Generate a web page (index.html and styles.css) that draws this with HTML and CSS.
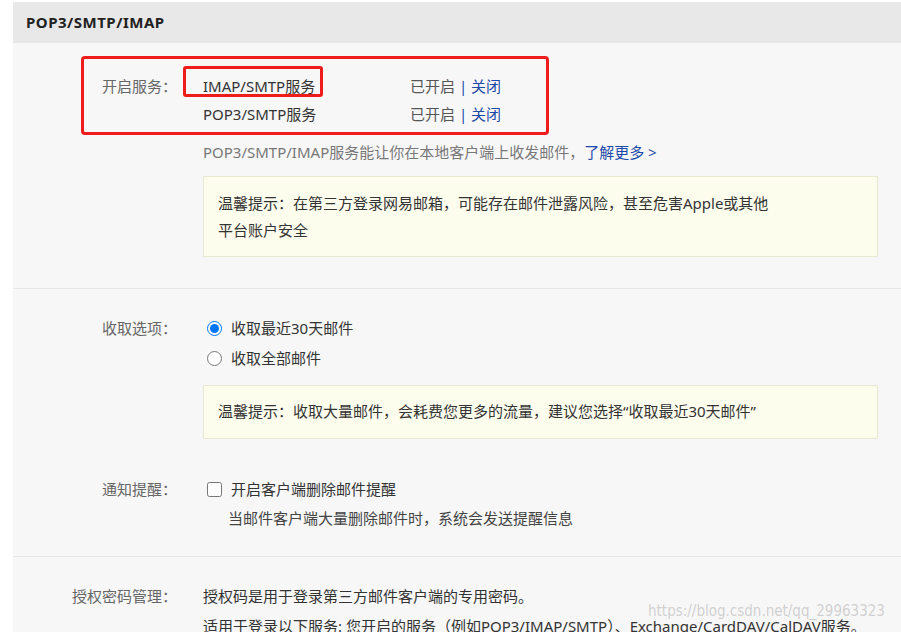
FILE: index.html
```html
<!DOCTYPE html>
<html>
<head>
  <meta charset="utf-8">
  <link rel="stylesheet" href="styles.css">
</head>
<body>
  <div class="panel">
    <header class="panel-head">POP3/SMTP/IMAP</header>

    <section class="block block-service">
      <div class="row">
        <div class="label">开启服务：</div>
        <div class="value">
          <div class="service">
            <span class="service-name">IMAP/SMTP服务</span>
            <span class="service-state">已开启 <a href="#" class="link">| 关闭</a></span>
          </div>
          <div class="service">
            <span class="service-name">POP3/SMTP服务</span>
            <span class="service-state">已开启 <a href="#" class="link">| 关闭</a></span>
          </div>
          <p class="desc">POP3/SMTP/IMAP服务能让你在本地客户端上收发邮件，<a href="#" class="link">了解更多 &gt;</a></p>
          <div class="tip tip-tall">温馨提示：在第三方登录网易邮箱，可能存在邮件泄露风险，甚至危害Apple或其他<br>平台账户安全</div>
        </div>
      </div>
      <div class="mark mark-outer"></div>
      <div class="mark mark-inner"></div>
    </section>

    <section class="block block-options">
      <div class="row">
        <div class="label">收取选项：</div>
        <div class="value">
          <label class="choice"><input type="radio" name="recv" checked> 收取最近30天邮件</label>
          <label class="choice"><input type="radio" name="recv"> 收取全部邮件</label>
          <div class="tip">温馨提示：收取大量邮件，会耗费您更多的流量，建议您选择“收取最近30天邮件”</div>
        </div>
      </div>
      <div class="row row-notify">
        <div class="label">通知提醒：</div>
        <div class="value">
          <label class="choice"><input type="checkbox"> 开启客户端删除邮件提醒</label>
          <p class="hint">当邮件客户端大量删除邮件时，系统会发送提醒信息</p>
        </div>
      </div>
    </section>

    <section class="block block-auth">
      <div class="row">
        <div class="label">授权密码管理：</div>
        <div class="value">
          <p class="line">授权码是用于登录第三方邮件客户端的专用密码。</p>
          <p class="line">适用于登录以下服务: 您开启的服务（例如POP3/IMAP/SMTP）、Exchange/CardDAV/CalDAV服务。</p>
        </div>
      </div>
    </section>
  </div>

  <div class="watermark">https://blog.csdn.net/qq_29963323</div>
</body>
</html>
```

FILE: styles.css
```css
* {
  margin: 0;
  padding: 0;
  box-sizing: border-box;
}

body {
  background: #fff;
  font-family: "Noto Sans", "Noto Sans CJK SC", sans-serif;
  font-size: 15px;
  color: #333;
  height: 632px;
  overflow: hidden;
  position: relative;
}

.panel {
  margin: 2px 0 0 13px;
  background: #f7f7f7;
  min-height: 700px;
}

.panel-head {
  height: 41px;
  line-height: 41px;
  padding-left: 13px;
  background: #e8e8e8;
  font-weight: bold;
  font-size: 15px;
  letter-spacing: 0.5px;
  color: #222;
}

.block {
  position: relative;
  border-bottom: 1px solid #e6e6e6;
}

.block-service {
  padding: 29px 23px 31px 0;
}

.block-options {
  padding: 24px 23px 24px 0;
}

.block-auth {
  padding: 24px 0 0 0;
  border-bottom: 0;
}

.row {
  display: grid;
  grid-template-columns: 164px 1fr;
  column-gap: 26px;
}

.row-notify {
  margin-top: 35px;
}

.label {
  text-align: right;
  color: #666;
  line-height: 28px;
}

.block-options .label,
.block-auth .label {
  line-height: 30px;
}

.service {
  display: flex;
  line-height: 28px;
}

.service-name {
  width: 207px;
  color: #333;
}

.service-state {
  color: #555;
}

.link {
  color: #1d4aa8;
  text-decoration: none;
}

.desc {
  line-height: 28px;
  margin-top: 10px;
  color: #777;
}

.tip {
  margin-top: 12px;
  padding: 12px 14px 13px;
  line-height: 27px;
  background: #fdfdee;
  border: 1px solid #e9e9d2;
  color: #333;
}

.tip-tall {
  margin-top: 10px;
  padding: 13px 14px 12px;
}

.choice {
  display: flex;
  align-items: center;
  gap: 9px;
  line-height: 30px;
  color: #333;
}

.choice input {
  width: 15px;
  height: 15px;
  margin: 0 0 0 4px;
  accent-color: #0075ff;
}

.hint {
  line-height: 28px;
  padding-left: 25px;
  color: #444;
}

.line {
  line-height: 30px;
  color: #333;
  white-space: nowrap;
}

.mark {
  position: absolute;
  border: 3px solid #f01c1c;
  border-radius: 4px;
  pointer-events: none;
}

.mark-outer {
  left: 68px;
  top: 13px;
  width: 468px;
  height: 79px;
}

.mark-inner {
  left: 170px;
  top: 23px;
  width: 140px;
  height: 31px;
  border-radius: 3px;
}

.watermark {
  position: absolute;
  left: 648px;
  top: 602px;
  font-family: "DejaVu Sans Condensed", sans-serif;
  font-size: 15px;
  color: rgba(195, 195, 195, 0.8);
  text-shadow: 0 0 1px #fff;
  pointer-events: none;
}
```
